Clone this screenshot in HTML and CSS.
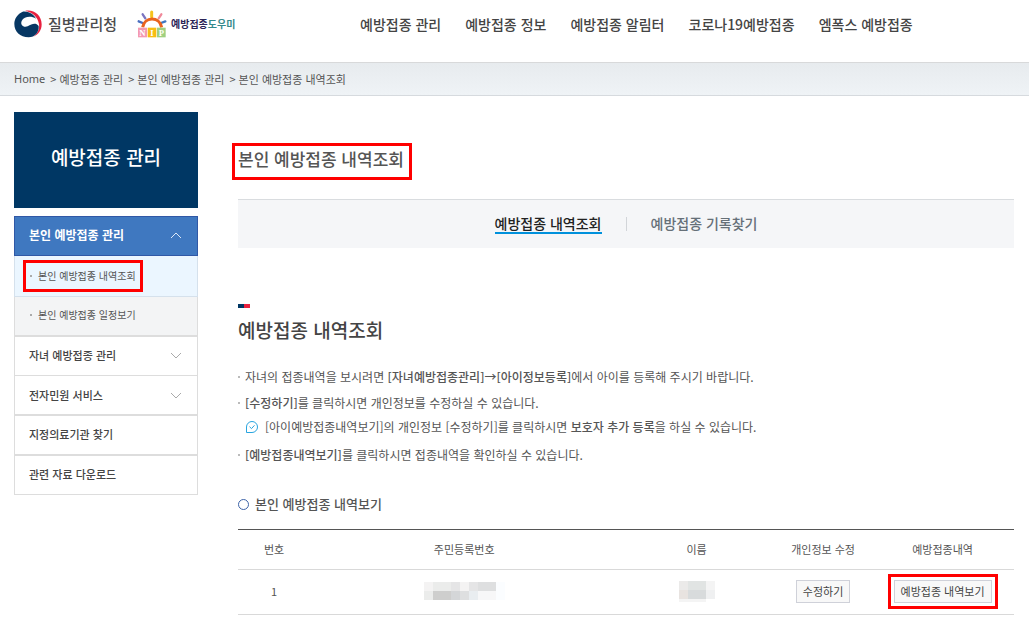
FILE: index.html
```html
<!DOCTYPE html>
<html lang="ko">
<head>
<meta charset="utf-8">
<meta name="viewport" content="width=device-width, initial-scale=1">
<title>예방접종도우미 - 본인 예방접종 내역조회</title>
<link rel="stylesheet" href="styles.css">
</head>
<body>
<header class="header">
  <div class="brands">
    <a class="agency" href="#">
      <svg class="emblem" viewBox="0 0 84 84" aria-hidden="true">
        <path fill="#e8203f" d="M33 3C58-3 83 15 83 43c0 18-10 31-25 37 13-10 19-22 17-37C72 21 55 6 33 3Z"/>
        <path fill="#073763" d="M26 5C43 3 59 12 66 26 52 17 30 19 23 33c-5 12 6 21 18 16 13-7 24-12 33-1 2 18-11 34-30 34C18 82 1 64 1 42 1 26 11 11 26 5Z"/>
      </svg>
      <span>질병관리청</span>
    </a>
    <a class="helper" href="#">
      <svg class="sun" viewBox="0 0 90 84" aria-hidden="true">
        <g fill="none" stroke-linecap="round" stroke-width="7">
          <path stroke="#4a6fc0" d="M5 34l12 5"/><path stroke="#7a74c0" d="M17 13l8 12"/>
          <path stroke="#f6c21c" stroke-width="9" d="M44 6v14"/><path stroke="#f08a9b" d="M73 13l-8 12"/>
          <path stroke="#3f78c2" d="M85 34l-13 5"/><path stroke="#ea641e" stroke-width="9" stroke-linecap="butt" d="M17 52c5-32 50-34 57 0"/>
        </g>
        <path fill="#f49ab0" d="M3 53h27v29H3z"/><path fill="#f8bd12" d="M32 53h26v29H32z"/><path fill="#9fd080" d="M60 53h26v29H60z"/>
        <g class="nip"><text x="16" y="78">N</text><text x="45" y="78">I</text><text x="73" y="78">P</text></g>
      </svg>
      <span class="helper-name">예방접종<em>도우미</em></span>
    </a>
  </div>
  <nav class="gnb" aria-label="주 메뉴">
    <a href="#">예방접종 관리</a>
    <a href="#">예방접종 정보</a>
    <a href="#">예방접종 알림터</a>
    <a href="#">코로나19예방접종</a>
    <a href="#">엠폭스 예방접종</a>
  </nav>
</header>

<nav class="breadcrumb" aria-label="현재 위치">
  <a class="home" href="#">Home</a>
  <a href="#">예방접종 관리</a>
  <a href="#">본인 예방접종 관리</a>
  <a href="#">본인 예방접종 내역조회</a>
</nav>

<div class="layout">
  <aside class="side">
    <h2 class="side-title">예방접종 관리</h2>
    <ul class="menu">
      <li>
        <a class="item active" href="#">본인 예방접종 관리
          <svg class="chevron" viewBox="0 0 12 8" aria-hidden="true"><path d="M1 7l5-5 5 5"/></svg></a>
        <ul class="submenu">
          <li><a class="current" href="#"><span class="mark">본인 예방접종 내역조회</span></a></li>
          <li><a href="#"><span class="mark">본인 예방접종 일정보기</span></a></li>
        </ul>
      </li>
      <li><a class="item" href="#">자녀 예방접종 관리
        <svg class="chevron" viewBox="0 0 12 8" aria-hidden="true"><path d="M1 2l5 5 5-5"/></svg></a></li>
      <li><a class="item joined" href="#">전자민원 서비스
        <svg class="chevron" viewBox="0 0 12 8" aria-hidden="true"><path d="M1 2l5 5 5-5"/></svg></a></li>
      <li><a class="item" href="#">지정의료기관 찾기</a></li>
      <li><a class="item" href="#">관련 자료 다운로드</a></li>
    </ul>
  </aside>

  <main class="content">
    <h1 class="page-title"><span>본인 예방접종 내역조회</span></h1>
    <nav class="tabs" aria-label="탭">
      <a class="selected" href="#">예방접종 내역조회</a>
      <i class="divider"></i>
      <a href="#">예방접종 기록찾기</a>
    </nav>

    <h2 class="section-title">예방접종 내역조회</h2>
    <ul class="notes">
      <li>자녀의 접종내역을 보시려면 <b>[자녀예방접종관리]→[아이정보등록]</b>에서 아이를 등록해 주시기 바랍니다.</li>
      <li><b>[수정하기]</b>를 클릭하시면 개인정보를 수정하실 수 있습니다.
        <p class="tip">
          <svg viewBox="0 0 14 14" aria-hidden="true"><path d="M1.5 12.5V7A5.5 5.5 0 1 1 7 12.5Z"/><path d="M4.5 6.7l2 1.9 3-3.3"/></svg>
          <span>[아이예방접종내역보기]의 개인정보 [수정하기]를 클릭하시면 <b>보호자 추가 등록</b>을 하실 수 있습니다.</span>
        </p>
      </li>
      <li><b>[예방접종내역보기]</b>를 클릭하시면 접종내역을 확인하실 수 있습니다.</li>
    </ul>

    <h3 class="table-title" id="records">본인 예방접종 내역보기</h3>
    <table class="records" aria-labelledby="records">
      <colgroup><col class="c-no"><col class="c-id"><col class="c-name"><col class="c-edit"><col class="c-view"></colgroup>
      <thead>
        <tr><th scope="col">번호</th><th scope="col">주민등록번호</th><th scope="col">이름</th><th scope="col">개인정보 수정</th><th scope="col">예방접종내역</th></tr>
      </thead>
      <tbody>
        <tr>
          <td>1</td>
          <td>
            <svg class="mosaic id-mosaic" viewBox="0 0 9 2" shape-rendering="crispEdges" role="img" aria-label="비공개">
              <path fill="#f4f3f3" d="M0 0h1v1H0zM4 0h1v1H4z"/><path fill="#ebeceb" d="M1 0h2v1H1zM0 1h1v1H0z"/>
              <path fill="#e5e5e6" d="M3 0h1v1H3zM5 0h1v1H5z"/><path fill="#dedfe0" d="M6 0h2v1H6zM4 1h1v1H4z"/>
              <path fill="#cececd" d="M1 1h2v1H1z"/><path fill="#d4d6d8" d="M3 1h1v1H3z"/>
              <path fill="#e9edf0" d="M5 1h1v1H5z"/><path fill="#f7f7f8" d="M6 1h2v1H6z"/><path fill="#fbfdff" d="M8 0h1v2H8z"/>
            </svg>
          </td>
          <td>
            <svg class="mosaic name-mosaic" viewBox="0 0 36 21" shape-rendering="crispEdges" role="img" aria-label="비공개">
              <path fill="#ebeae9" d="M0 0h9v9H0z"/><path fill="#e1e4e3" d="M9 0h18v9H9z"/><path fill="#f4f4f4" d="M27 0h9v9h-9zM0 18h27v3H0z"/>
              <path fill="#e8e3e0" d="M0 9h9v9H0z"/><path fill="#d8dbdc" d="M9 9h18v9H9z"/><path fill="#eff0f1" d="M27 9h9v9h-9z"/>
            </svg>
          </td>
          <td><button type="button">수정하기</button></td>
          <td><button class="marked" type="button">예방접종 내역보기</button></td>
        </tr>
      </tbody>
    </table>
  </main>
</div>
</body>
</html>
```
FILE: styles.css
```css
* { box-sizing: border-box; }
body {
  margin: 0;
  background: #fff;
  color: #555;
  font-family: "Noto Sans CJK KR", "Noto Sans", sans-serif;
  font-size: 12px;
  line-height: 20px;
}
a { color: inherit; text-decoration: none; }
ul, h1, h2, h3, p { margin: 0; padding: 0; list-style: none; }

.header { display: flex; align-items: flex-start; border-bottom: 1px solid #d8d9da; padding: 8px 14px 22px; }
.brands { display: flex; flex: 0 0 346px; gap: 20px; align-items: center; height: 32px; }
.agency, .helper { display: flex; align-items: center; }
.agency { gap: 6px; font-size: 15px; font-weight: 500; color: #4c4c4e; }
.emblem { width: 28px; height: 28px; }
.helper { gap: 4px; }
.sun { width: 30px; height: 28px; }
.nip { fill: #fff; font: bold 26px "Liberation Serif", serif; text-anchor: middle; }
.helper-name { font-size: 10px; font-weight: 700; color: #2c2557; }
.helper-name em { font-style: normal; color: #35898c; }
.gnb { display: flex; gap: 24px; height: 32px; align-items: center; font-size: 14px; font-weight: 500; color: #444; white-space: nowrap; }

.breadcrumb {
  display: flex;
  align-items: center;
  height: 33px;
  padding: 0 14px;
  border-bottom: 1px solid #d6dade;
  background: linear-gradient(#e7ebee, #eff3f6);
  font-size: 11px;
}
.breadcrumb .home { font-family: "Noto Sans", sans-serif; }
.breadcrumb a + a::before { content: ">"; margin: 0 3px 0 5px; }

.layout { display: flex; align-items: flex-start; gap: 40px; padding: 16px 15px 11px 14px; }
.side { flex: 0 0 184px; }
.side-title {
  display: flex;
  align-items: center;
  justify-content: center;
  height: 96px;
  padding-bottom: 6px;
  margin-bottom: 8px;
  background: #003764;
  color: #fff;
  font-size: 19px;
  font-weight: 500;
}
.item {
  display: flex;
  align-items: center;
  justify-content: space-between;
  height: 40px;
  padding: 0 15px 2px 14px;
  border: 1px solid #ddd;
  font-size: 11px;
  font-weight: 500;
  color: #444;
}
.item.active { background: #3f78c0; border-color: #3058a6; color: #fff; font-size: 12px; font-weight: 700; }
.item.joined { height: 39px; padding-bottom: 0; border-top: 0; }
.chevron { width: 12px; height: 8px; fill: none; stroke: #aaa; stroke-width: 1; }
.active .chevron { stroke: #dce8f8; }
.submenu a {
  display: flex;
  align-items: center;
  height: 39px;
  padding: 0 0 2px 8px;
  border: 1px solid #ddd;
  border-top: 0;
  background: #f3f4f5;
  font-size: 10px;
}
.submenu .current { height: 41px; padding-bottom: 0; background: #ebf6ff; border-color: #d5e1ec; }
.mark { display: flex; align-items: center; gap: 6px; height: 32px; padding: 0 7px; }
.mark::before { content: ""; width: 2px; height: 2px; background: #aaa; }
.current .mark { border: 3px solid #f00; padding: 0 4px; }

.content { flex: 1; min-width: 0; }
.page-title { display: flex; margin: 31px 0 19px -6px; font-size: 17px; font-weight: 500; color: #555; }
.page-title span { border: 3px solid #f00; padding: 1px 5px 7px 3px; line-height: 23px; }
.tabs {
  display: flex;
  align-items: center;
  justify-content: center;
  gap: 24px;
  height: 49px;
  border-top: 1px solid #d9dcdf;
  background: #f5f6f8;
  font-size: 14px;
  font-weight: 500;
  color: #667078;
}
.tabs a { border-bottom: 2px solid transparent; line-height: 17px; }
.tabs .selected { border-color: #0091dc; color: #222; }
.divider { width: 1px; height: 14px; background: #d2d5d9; }
.section-title { margin-top: 56px; font-size: 19px; font-weight: 500; line-height: 28px; color: #444; }
.section-title::before {
  content: "";
  display: block;
  width: 12px;
  height: 4px;
  margin-bottom: 8px;
  background: linear-gradient(90deg, #003764 50%, #e9213f 50%);
}
.notes { display: grid; gap: 6px; margin-top: 23px; }
.notes > li { padding-left: 7px; background: linear-gradient(#bbb, #bbb) 0 9px / 2px 2px no-repeat; }
.notes b { font-weight: 500; }
.tip { display: flex; align-items: center; gap: 6px; margin: 4px 0 2px; }
.tip svg { width: 14px; height: 14px; fill: none; stroke: #29a5df; }
.table-title { display: flex; align-items: center; gap: 6px; margin: 29px 0 15px; font-size: 13px; font-weight: 500; }
.table-title::before { content: ""; width: 9px; height: 9px; border: 1px solid #3d63a8; border-radius: 50%; }

.records { width: 100%; table-layout: fixed; border-collapse: separate; border-spacing: 0; border-top: 1px solid #555; font-size: 11px; text-align: center; }
.c-no { width: 9.3%; }
.c-id { width: 39.7%; }
.c-name { width: 20.2%; }
.c-edit { width: 12.4%; }
.c-view { width: 18.4%; }
.records th, .records td { padding: 0 0 2px; border-bottom: 1px solid #d9d9d9; font-weight: 400; }
.records th { height: 40px; }
.records td { height: 45px; }
.mosaic { display: block; margin: 0 auto; }
.id-mosaic { width: 81px; height: 18px; }
.name-mosaic { width: 36px; height: 21px; }
.records button {
  height: 23px;
  padding: 0 6px;
  border: 1px solid #cfd1d9;
  background: #f8f8f8;
  color: #444;
  font: inherit;
  line-height: 20px;
}
.records .marked { outline: 3px solid #f00; outline-offset: 3px; }
```
